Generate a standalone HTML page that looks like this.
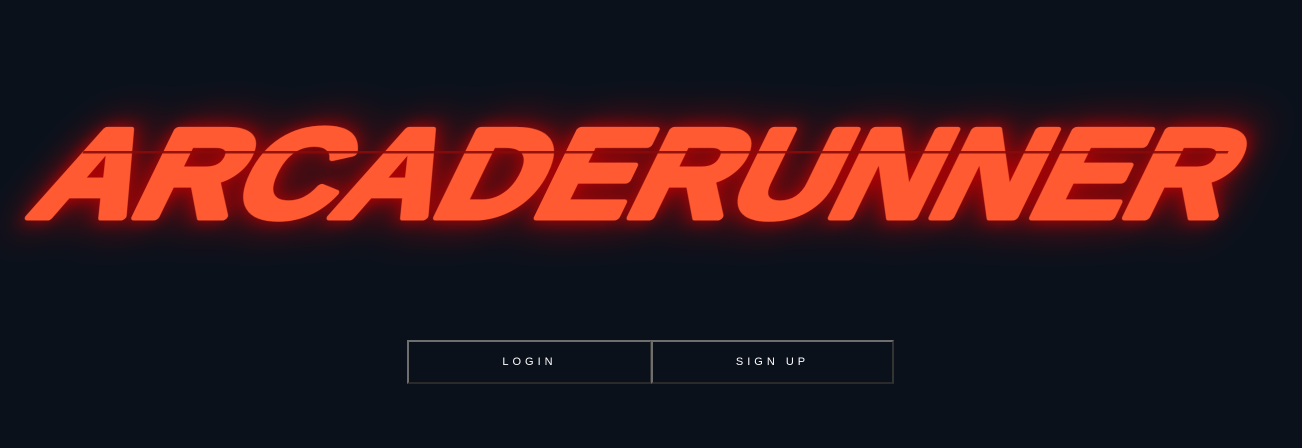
<!DOCTYPE html>
<html><head><meta charset="utf-8"><style>
html,body{margin:0;padding:0;background:#0a111b;width:1302px;height:448px;overflow:hidden;font-family:"Liberation Sans",sans-serif}
svg{position:absolute;left:0;top:0}
.btn{position:absolute;top:340px;height:44px;box-sizing:border-box;border:2px solid;border-color:#6e6e6e #333 #2a2a2a #6e6e6e;color:#fff;font-size:11px;letter-spacing:4px;display:flex;align-items:center;justify-content:center;background:#0a111b}
</style></head><body>
<svg width="1302" height="448">
<defs>
<filter id="g" x="-20%" y="-80%" width="140%" height="260%">
<feGaussianBlur in="SourceAlpha" stdDeviation="22" result="b"/>
<feFlood flood-color="#c00000" flood-opacity="0.85"/>
<feComposite in2="b" operator="in" result="glow"/>
<feGaussianBlur in="SourceAlpha" stdDeviation="8" result="b2"/>
<feFlood flood-color="#d00808" flood-opacity="0.75"/>
<feComposite in2="b2" operator="in" result="glow2"/>
<feMerge><feMergeNode in="glow"/><feMergeNode in="glow2"/><feMergeNode in="SourceGraphic"/></feMerge>
</filter>
</defs>
<g transform="translate(0,220) skewX(-26)">
<text x="24" y="-3" font-size="126" font-weight="bold" fill="#ff5a32" stroke="#ff5a32" stroke-width="7" stroke-linejoin="round" textLength="1192" lengthAdjust="spacingAndGlyphs" filter="url(#g)">ARCADERUNNER</text>
<rect x="50" y="-69" width="1145" height="2.5" fill="#8a0a0a" opacity="0.9"/>
</g>
</svg>
<div class="btn" style="left:407px;width:245px">LOGIN</div>
<div class="btn" style="left:651px;width:243px">SIGN UP</div>
</body></html>
